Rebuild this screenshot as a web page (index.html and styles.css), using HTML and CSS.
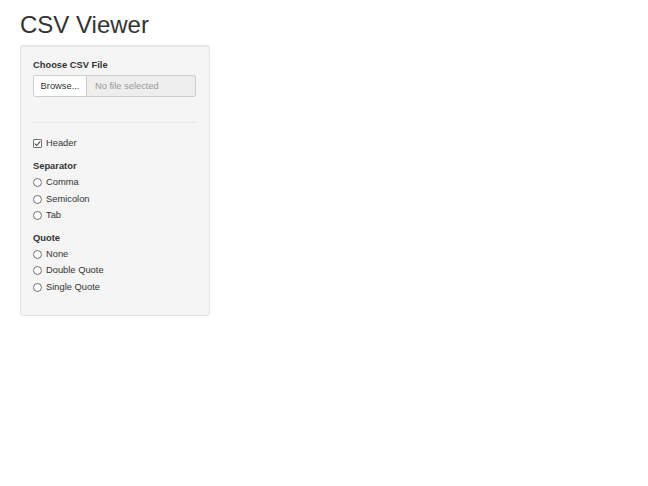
FILE: index.html
```html
<!DOCTYPE html>
<html>
<head>
<meta charset="utf-8">
<title>CSV Viewer</title>
<link rel="stylesheet" href="styles.css">
</head>
<body>
<div class="page">
  <h1 class="title">CSV Viewer</h1>
  <div class="well">
    <div class="form-group file-group">
      <label class="control-label">Choose CSV File</label>
      <div class="input-group">
        <span class="btn-browse">Browse...</span>
        <span class="file-name">No file selected</span>
      </div>
    </div>
    <hr class="sep">
    <div class="check-row">
      <span class="box checked">
        <svg viewBox="0 0 9 9" width="9" height="9"><path d="M1.8 4.6 L3.7 6.5 L7.3 2.4" fill="none" stroke="#444" stroke-width="1.1"/></svg>
      </span>
      <span class="opt-text">Header</span>
    </div>
    <div class="form-group">
      <label class="control-label">Separator</label>
      <div class="radio-list">
        <div class="check-row"><span class="circle"></span><span class="opt-text">Comma</span></div>
        <div class="check-row"><span class="circle"></span><span class="opt-text">Semicolon</span></div>
        <div class="check-row"><span class="circle"></span><span class="opt-text">Tab</span></div>
      </div>
    </div>
    <div class="form-group">
      <label class="control-label">Quote</label>
      <div class="radio-list">
        <div class="check-row"><span class="circle"></span><span class="opt-text">None</span></div>
        <div class="check-row"><span class="circle"></span><span class="opt-text">Double Quote</span></div>
        <div class="check-row"><span class="circle"></span><span class="opt-text">Single Quote</span></div>
      </div>
    </div>
  </div>
</div>
</body>
</html>
```
FILE: styles.css
```css
* { box-sizing: border-box; }
html, body { margin: 0; padding: 0; background: #fff; }
body {
  font-family: "Liberation Sans", Arial, sans-serif;
  font-size: 9.33px;
  line-height: 13.33px;
  color: #333;
}
.page { padding: 0 20px; }
.title {
  font-family: "Liberation Sans", Arial, sans-serif;
  font-weight: 500;
  font-size: 24px;
  line-height: 26.4px;
  margin: 12px 0 6.6px 0;
  color: #333;
}
.well {
  width: 190px;
  min-height: 271px;
  background: #f5f5f5;
  border: 1px solid #e3e3e3;
  border-radius: 3px;
  box-shadow: inset 0 1px 1px rgba(0,0,0,0.05);
  padding: 12.67px 13px 7px 12px;
}
.control-label {
  display: block;
  font-weight: bold;
  margin-bottom: 2.33px;
}
.file-group .control-label { margin-bottom: 3.33px; }
.input-group {
  display: flex;
  height: 22px;
}
.btn-browse {
  display: flex;
  align-items: center;
  justify-content: center;
  width: 54px;
  background: #fff;
  border: 1px solid #ccc;
  border-radius: 2.67px 0 0 2.67px;
  color: #333;
}
.file-name {
  flex: 1;
  display: flex;
  align-items: center;
  padding-left: 8px;
  background: #eee;
  border: 1px solid #ccc;
  border-left: none;
  border-radius: 0 2.67px 2.67px 0;
  color: #999;
}
.sep {
  border: 0;
  border-top: 1px solid #e8e8e8;
  margin: 25px 0 14px 0;
}
.check-row {
  display: flex;
  align-items: center;
  height: 13.33px;
}
.opt-text { margin-left: 4px; }
.box {
  display: inline-flex;
  width: 9px;
  height: 9px;
  border: 1px solid #6f6f6f;
  border-radius: 1px;
  background: #fff;
  position: relative;
}
.box svg { position: absolute; left: -1px; top: -1px; }
.circle {
  display: inline-block;
  width: 9px;
  height: 9px;
  border: 1px solid #6f6f6f;
  border-radius: 50%;
  background: #fff;
}
.form-group { margin-top: 9.67px; }
.file-group { margin-top: 0; }
.radio-list { display: flex; flex-direction: column; gap: 3.33px; }
.form-group + .form-group { margin-top: 9.33px; }
```
